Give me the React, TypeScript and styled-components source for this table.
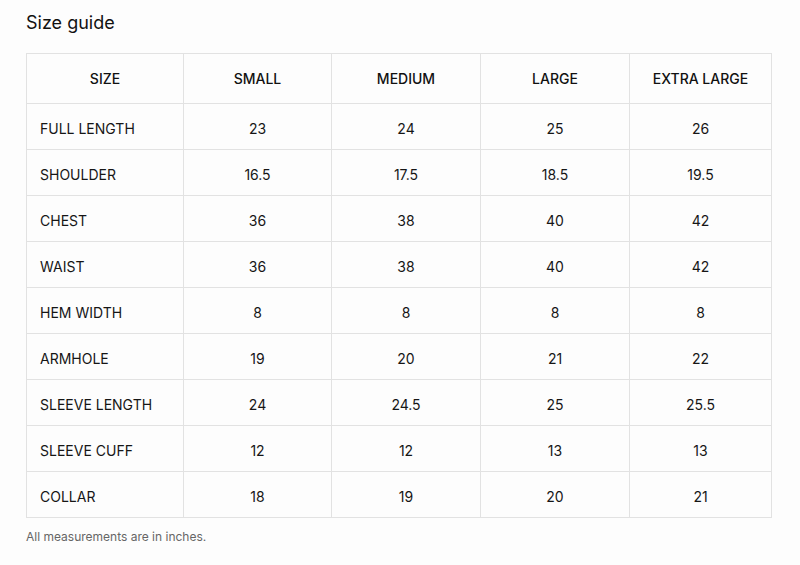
import React from "react";
import styled, { createGlobalStyle } from "styled-components";

const Global = createGlobalStyle`
  html, body { margin: 0; padding: 0; background: #fdfdfd; }
  body { font-family: Inter, "Liberation Sans", sans-serif; color: #1a1a1a; }
`;

const Page = styled.div`
  padding: 11px 28px 0 26px;
  width: 800px;
  box-sizing: border-box;
`;

const Title = styled.h1`
  margin: 0 0 18px 0;
  font-size: 18px;
  font-weight: 400;
  line-height: 24px;
  color: #111;
`;

const Table = styled.table`
  border-collapse: collapse;
  width: 740px;
  table-layout: fixed;
  font-size: 14px;
`;

const Th = styled.th<{ $w: number }>`
  width: ${(p) => p.$w}px;
  height: 49px;
  border: 1px solid #e2e2e2;
  font-weight: 500;
  text-align: center;
  padding: 0;
  color: #111;
`;

const Td = styled.td<{ $first?: boolean }>`
  box-sizing: border-box;
  height: 46px;
  border: 1px solid #e2e2e2;
  text-align: ${(p) => (p.$first ? "left" : "center")};
  padding: 3px 0 0 ${(p) => (p.$first ? "13px" : "0")};
  color: #161616;
`;

const Note = styled.p`
  margin: 11px 0 0 0;
  font-size: 12px;
  color: #666;
`;

const headers = ["SIZE", "SMALL", "MEDIUM", "LARGE", "EXTRA LARGE"];
const widths = [156, 147, 148, 148, 141];
const rows: string[][] = [
  ["FULL LENGTH", "23", "24", "25", "26"],
  ["SHOULDER", "16.5", "17.5", "18.5", "19.5"],
  ["CHEST", "36", "38", "40", "42"],
  ["WAIST", "36", "38", "40", "42"],
  ["HEM WIDTH", "8", "8", "8", "8"],
  ["ARMHOLE", "19", "20", "21", "22"],
  ["SLEEVE LENGTH", "24", "24.5", "25", "25.5"],
  ["SLEEVE CUFF", "12", "12", "13", "13"],
  ["COLLAR", "18", "19", "20", "21"],
];

export default function App() {
  return (
    <Page>
      <Global />
      <Title>Size guide</Title>
      <Table>
        <thead>
          <tr>
            {headers.map((h, i) => (
              <Th key={h} $w={widths[i]}>{h}</Th>
            ))}
          </tr>
        </thead>
        <tbody>
          {rows.map((r) => (
            <tr key={r[0]}>
              {r.map((c, i) => (
                <Td key={i} $first={i === 0}>{c}</Td>
              ))}
            </tr>
          ))}
        </tbody>
      </Table>
      <Note>All measurements are in inches.</Note>
    </Page>
  );
}
